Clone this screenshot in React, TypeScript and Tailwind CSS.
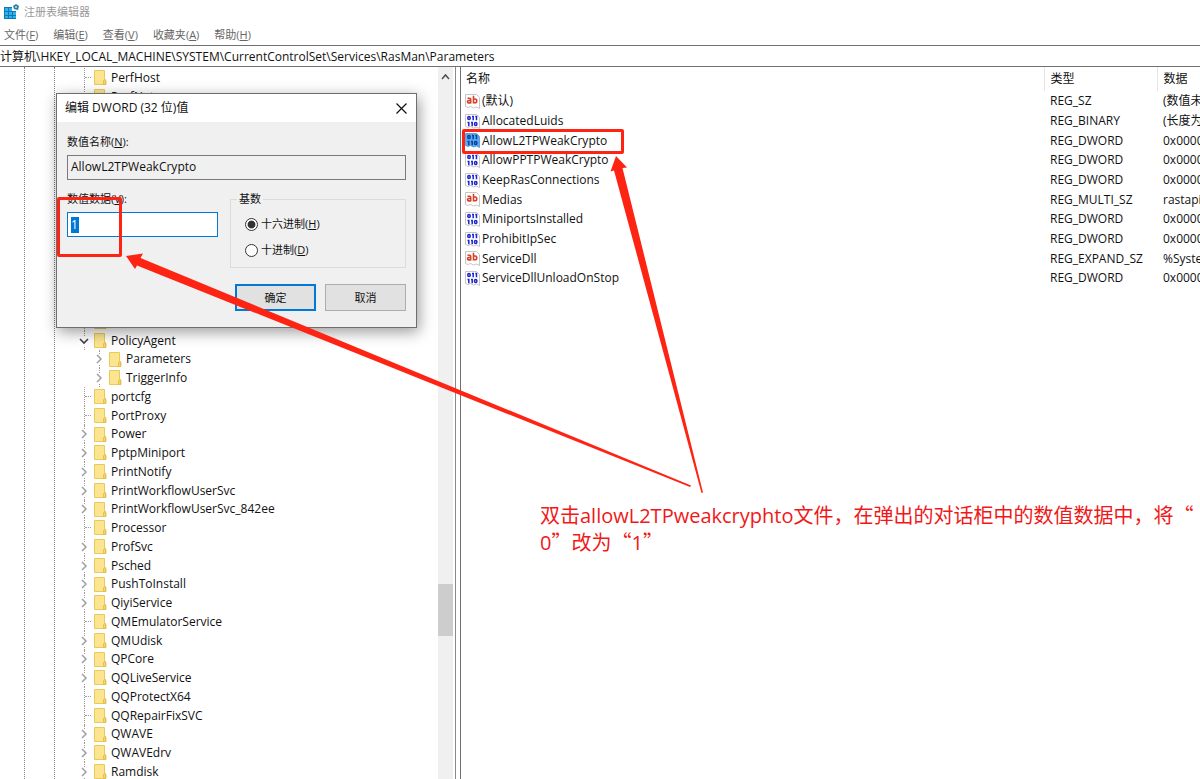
import { clsx } from "clsx";

type TreeItem = {
  name: string;
  state?: "open" | "closed";
  child?: boolean;
};

type RegValue = {
  name: string;
  type: string;
  data: string;
  selected?: boolean;
};

const menus = [
  { label: "文件", accessKey: "F" },
  { label: "编辑", accessKey: "E" },
  { label: "查看", accessKey: "V" },
  { label: "收藏夹", accessKey: "A" },
  { label: "帮助", accessKey: "H" },
];

const treeItems: TreeItem[] = [
  { name: "PerfHost" },
  { name: "PerfNet" },
  // keys that sit behind the dialog
  ...Array.from({ length: 12 }, () => ({ name: "" })),
  { name: "PolicyAgent", state: "open" },
  { name: "Parameters", state: "closed", child: true },
  { name: "TriggerInfo", state: "closed", child: true },
  { name: "portcfg" },
  { name: "PortProxy" },
  { name: "Power", state: "closed" },
  { name: "PptpMiniport", state: "closed" },
  { name: "PrintNotify", state: "closed" },
  { name: "PrintWorkflowUserSvc", state: "closed" },
  { name: "PrintWorkflowUserSvc_842ee", state: "closed" },
  { name: "Processor" },
  { name: "ProfSvc", state: "closed" },
  { name: "Psched", state: "closed" },
  { name: "PushToInstall", state: "closed" },
  { name: "QiyiService", state: "closed" },
  { name: "QMEmulatorService" },
  { name: "QMUdisk", state: "closed" },
  { name: "QPCore", state: "closed" },
  { name: "QQLiveService", state: "closed" },
  { name: "QQProtectX64" },
  { name: "QQRepairFixSVC" },
  { name: "QWAVE", state: "closed" },
  { name: "QWAVEdrv", state: "closed" },
  { name: "Ramdisk", state: "closed" },
];

const values: RegValue[] = [
  { name: "(默认)", type: "REG_SZ", data: "(数值未" },
  { name: "AllocatedLuids", type: "REG_BINARY", data: "(长度为" },
  { name: "AllowL2TPWeakCrypto", type: "REG_DWORD", data: "0x0000", selected: true },
  { name: "AllowPPTPWeakCrypto", type: "REG_DWORD", data: "0x0000" },
  { name: "KeepRasConnections", type: "REG_DWORD", data: "0x0000" },
  { name: "Medias", type: "REG_MULTI_SZ", data: "rastapi" },
  { name: "MiniportsInstalled", type: "REG_DWORD", data: "0x0000" },
  { name: "ProhibitIpSec", type: "REG_DWORD", data: "0x0000" },
  { name: "ServiceDll", type: "REG_EXPAND_SZ", data: "%Syste" },
  { name: "ServiceDllUnloadOnStop", type: "REG_DWORD", data: "0x0000" },
];

function RegeditIcon() {
  return (
    <svg width="16" height="16" viewBox="0 0 16 16" className="shrink-0">
      <path d="M0 3h12v12H0z" fill="#0e78b8" />
      <path
        d="M1 4h3v3H1zM5 4h3v3H5zM1 8h3v3H1zM5 8h3v3H5zM9 8h3v3H9zM1 12h3v2H1zM5 12h3v2H5zM9 12h3v2H9z"
        fill="#2fb2ea"
      />
      <path d="M8 2h5v5H8z" fill="#fff" />
      <path d="M12 0l3 2-1 4-4-1-1-3z" fill="#2b7fa6" />
      <circle cx="12" cy="3" r="1" fill="#bfe6f5" />
    </svg>
  );
}

function FolderIcon() {
  return (
    <svg width="13" height="15" viewBox="0 0 13 15" className="shrink-0">
      <path d="M.5.5h10v9l1.5 1v4H.5z" fill="#fde58f" stroke="#e8c95c" />
      <path d="M9.5 14.5v-4l2-1v5z" fill="#f9d766" stroke="#dfb94a" strokeWidth=".8" />
    </svg>
  );
}

function Chevron({ open }: { open: boolean }) {
  return (
    <svg width="10" height="10" viewBox="0 0 10 10" fill="none" className="relative bg-white">
      {open ? (
        <path d="M1 3l4 4 4-4" stroke="#404040" strokeWidth="1.6" />
      ) : (
        <path d="M3 1l4 4-4 4" stroke="#a0a0a0" strokeWidth="1.5" />
      )}
    </svg>
  );
}

function ValueIcon({ type, selected }: { type: string; selected?: boolean }) {
  const isText = type.endsWith("SZ");
  return (
    <svg width="15" height="15" viewBox="0 0 15 15" className="shrink-0">
      <path
        d="M.5.5h11l3 3v11l-3-1.5-3 1-3-1.5-2.5 1-2.5-1z"
        fill={selected ? "#5aaaf0" : "#fff"}
        stroke={selected ? "#4a94d8" : "#b8b8b8"}
        strokeWidth=".8"
      />
      {isText ? (
        <g fill="none" stroke="#d8402a" strokeWidth="1.6">
          <path d="M2.5 4.2h2a1.2 1.2 0 0 1 1.2 1.2v4M5.7 6.5h-2a1.2 1.2 0 0 0 0 2.4h2" />
          <path d="M8.5 1.8v7.8M8.5 5h1.7a1.5 1.5 0 0 1 1.5 1.5v.8a1.5 1.5 0 0 1-1.5 1.5h-1.7" />
        </g>
      ) : (
        <g fill="none" stroke={selected ? "#0b3f9c" : "#1c25d0"} strokeWidth="1.5">
          <rect x="2.8" y="2.5" width="2.4" height="3" rx="1.2" />
          <path d="M8.2 1.8v4.5M11.5 1.8v4.5M7 2.5h1.2M10.3 2.5h1.2" />
          <path d="M3.8 7.8v4.5M7.2 7.8v4.5M2.5 8.5h1.3M6 8.5h1.2" />
          <rect x="9.5" y="8.5" width="2.4" height="3" rx="1.2" />
        </g>
      )}
    </svg>
  );
}

function TreeRow({ item }: { item: TreeItem }) {
  return (
    <li
      className={clsx(
        "flex h-[19px] items-center whitespace-nowrap nth-[4n]:h-[18px]",
        item.child ? "pl-[94px]" : "pl-[79px]"
      )}
    >
      <span className="relative flex h-full w-[15px] shrink-0 items-center">
        <span className="absolute inset-y-0 left-[5px] border-l border-dotted border-[#9a9a9a]" />
        {item.state ? (
          <Chevron open={item.state === "open"} />
        ) : (
          <span className="ml-[6px] w-[6px] border-t border-dotted border-[#9a9a9a]" />
        )}
      </span>
      <FolderIcon />
      <span className="ml-[4px]">{item.name}</span>
    </li>
  );
}

function Tree() {
  return (
    <div className="flex w-[456px] shrink-0 overflow-hidden border-r border-[#8a8a8a] pr-[2px]">
      <div className="relative min-w-0 flex-1">
        <span className="absolute inset-y-0 left-[24px] border-l border-dotted border-[#808080]" />
        <span className="absolute inset-y-0 left-[54px] border-l border-dotted border-[#808080]" />
        <ul className="pt-px">
          {treeItems.map((item, i) => (
            <TreeRow key={i} item={item} />
          ))}
        </ul>
      </div>
      <div className="flex w-[15px] shrink-0 flex-col items-center bg-[#f0f0f0]">
        <svg width="9" height="20" viewBox="0 0 9 20" fill="none">
          <path d="M1 12l3.5-4L8 12" stroke="#505050" strokeWidth="1.5" />
        </svg>
        <div className="grow-[496]" />
        <div className="h-[52px] w-full bg-[#cdcdcd]" />
        <div className="grow-[143]" />
      </div>
    </div>
  );
}

function ValueTable() {
  return (
    <div className="ml-[4px] min-w-0 flex-1 overflow-hidden border-l border-[#707070]">
      <table className="w-full table-fixed border-collapse text-left whitespace-nowrap">
        <colgroup>
          <col />
          <col className="w-[113px]" />
          <col className="w-[43px]" />
        </colgroup>
        <thead>
          <tr className="h-[24px]">
            <th className="p-0 pl-[5px] font-normal">名称</th>
            <th className="border-l border-[#e5e5e5] p-0 pl-[6px] font-normal">类型</th>
            <th className="border-l border-[#e5e5e5] p-0 pl-[6px] font-normal">数据</th>
          </tr>
        </thead>
        <tbody>
          {values.map((value) => (
            <tr key={value.name} className="h-[20px] nth-[3n]:h-[19px]">
              <td className="p-0 pl-[4px]">
                <span className="flex items-center gap-[2px]">
                  <ValueIcon type={value.type} selected={value.selected} />
                  {value.name}
                </span>
              </td>
              <td className="p-0 pl-[6px]">{value.type}</td>
              <td className="overflow-hidden p-0 pl-[6px]">{value.data}</td>
            </tr>
          ))}
        </tbody>
      </table>
    </div>
  );
}

function EditDialog() {
  return (
    <form
      role="dialog"
      aria-labelledby="dialog-title"
      className="absolute top-[93px] left-[56px] w-[361px] border border-[#6e6e6e] bg-[#f0f0f0] shadow-[2px_4px_14px_rgba(0,0,0,0.4)]"
    >
      <div className="flex h-[28px] items-center justify-between bg-white pr-[9px] pl-[8px]">
        <h2 id="dialog-title">编辑 DWORD (32 位)值</h2>
        <button type="button" aria-label="关闭">
          <svg width="11" height="11" viewBox="0 0 11 11" className="block">
            <path d="M.5.5l10 10M10.5.5l-10 10" stroke="#111" strokeWidth="1.2" />
          </svg>
        </button>
      </div>
      <div className="px-[10px] pt-[12px] pb-[16px] text-[11px]">
        <label htmlFor="value-name" className="block">
          数值名称(<u>N</u>):
        </label>
        <input
          id="value-name"
          readOnly
          defaultValue="AllowL2TPWeakCrypto"
          className="mt-[5px] block h-[25px] w-full border border-[#7a7a7a] bg-[#f0f0f0] px-[3px] pb-[2px] text-[12px] outline-none"
        />
        <div className="mt-[11px] flex gap-[12px]">
          <div className="w-[151px]">
            <label htmlFor="value-data" className="block">
              数值数据(<u>V</u>):
            </label>
            <div className="mt-[5px] flex h-[25px] items-center border border-[#0078d7] bg-white px-[3px]">
              <input
                id="value-data"
                defaultValue="1"
                className="w-[8px] bg-[#0078d7] text-[12px] text-white outline-none"
              />
            </div>
          </div>
          <fieldset className="h-[77px] flex-1 border border-[#dcdcdc] pl-[14px]">
            <legend className="-ml-[8px] px-[2px]">基数</legend>
            <label className="mt-[9px] flex items-center gap-[3px]">
              <input
                type="radio"
                name="base"
                defaultChecked
                className="size-[13px] appearance-none rounded-full border border-[#333] bg-white bg-radial from-[#333] from-45% to-white to-55%"
              />
              <span>
                十六进制(<u>H</u>)
              </span>
            </label>
            <label className="mt-[10px] flex items-center gap-[3px]">
              <input
                type="radio"
                name="base"
                className="size-[13px] appearance-none rounded-full border border-[#333] bg-white"
              />
              <span>
                十进制(<u>D</u>)
              </span>
            </label>
          </fieldset>
        </div>
        <div className="mt-[16px] flex justify-end gap-[9px]">
          <button type="submit" className="h-[27px] w-[81px] border-2 border-[#0078d7] bg-[#e1e1e1]">
            确定
          </button>
          <button type="button" className="h-[27px] w-[81px] border border-[#adadad] bg-[#e1e1e1]">
            取消
          </button>
        </div>
      </div>
    </form>
  );
}

function Annotations() {
  return (
    <>
      <div className="absolute top-[197px] left-[57px] h-[60px] w-[65px] rounded-xs border-3 border-[#fe2413]" />
      <div className="absolute top-[129px] left-[462px] h-[25px] w-[162px] rounded-xs border-3 border-[#fe2413]" />
      <svg
        width="720"
        height="500"
        viewBox="0 0 720 500"
        fill="#fe2413"
        className="pointer-events-none absolute top-0 left-0"
      >
        <path d="M126 256L143 253.5L140.5 258L691 485.5L690 487L137 265.5L135 269z" />
        <path d="M616 156L627 167.5L622.5 168L703 492.5L701.5 493L614 170.5L610.5 171.5z" />
      </svg>
      <p
        lang="zh-CN"
        className="absolute top-[502px] left-[540px] w-[660px] text-xl leading-[26px] text-[#f01818]"
      >
        双击allowL2TPweakcryphto文件，在弹出的对话柜中的数值数据中，将
        <span className="font-['Noto_Sans_CJK_SC',sans-serif]">“</span>
        <br />0<span className="font-['Noto_Sans_CJK_SC',sans-serif]">”改为“</span>1
        <span className="font-['Noto_Sans_CJK_SC',sans-serif]">”</span>
      </p>
    </>
  );
}

export default function App() {
  return (
    <div className="relative flex h-screen flex-col overflow-hidden bg-white font-['Open_Sans','Noto_Sans_CJK_SC',sans-serif] text-[12px] leading-[16px] text-[#111]">
      <header className="flex h-[24px] shrink-0 items-center gap-[4px] pl-[4px] text-[11px] text-[#999]">
        <RegeditIcon />
        <h1>注册表编辑器</h1>
      </header>
      <nav className="flex h-[21px] shrink-0 items-center gap-[15px] pl-[4px] text-[11px] text-[#666]">
        {menus.map((menu) => (
          <button key={menu.accessKey} type="button">
            {menu.label}(<u>{menu.accessKey}</u>)
          </button>
        ))}
      </nav>
      <input
        aria-label="地址"
        defaultValue="计算机\HKEY_LOCAL_MACHINE\SYSTEM\CurrentControlSet\Services\RasMan\Parameters"
        className="h-[22px] w-full shrink-0 border-y border-[#707070] pb-px outline-none"
      />
      <main className="flex min-h-0 flex-1">
        <Tree />
        <ValueTable />
      </main>
      <EditDialog />
      <Annotations />
    </div>
  );
}
